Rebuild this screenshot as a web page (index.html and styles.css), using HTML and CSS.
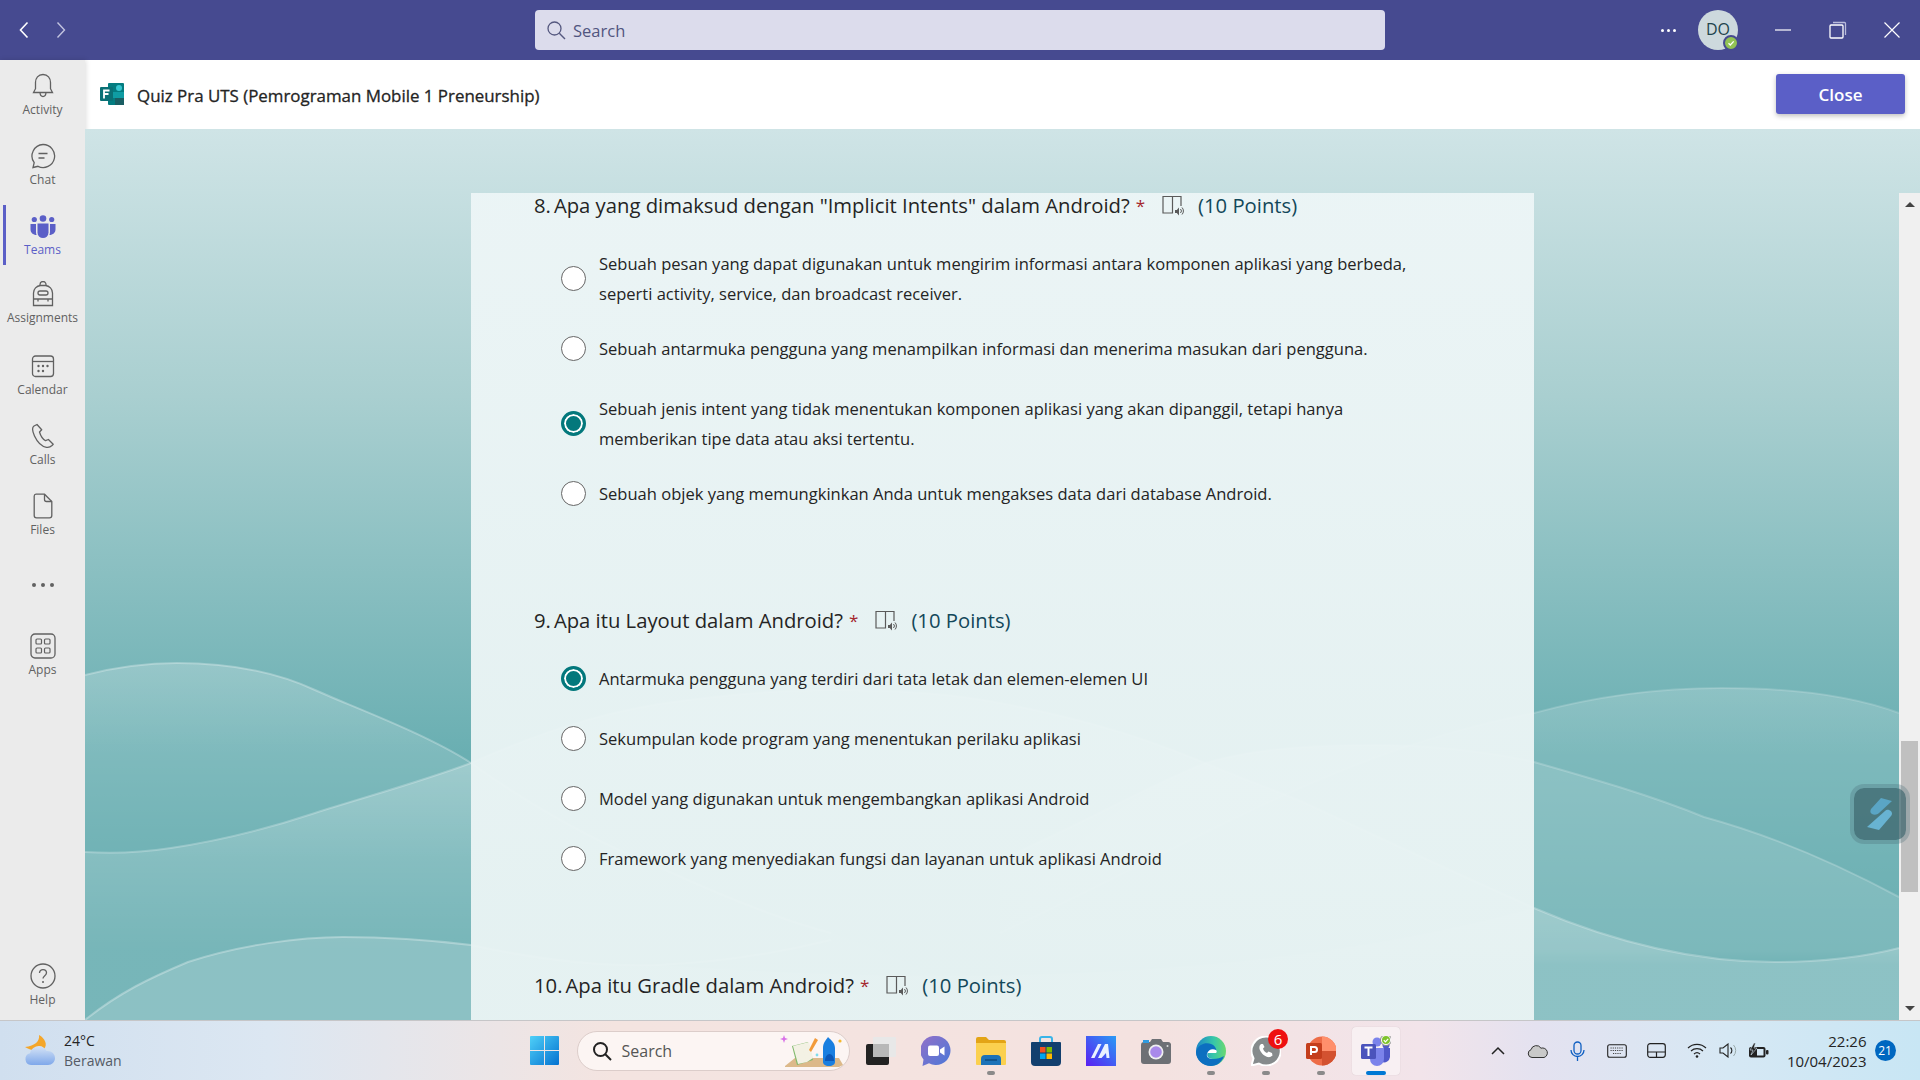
FILE: index.html
```html
<!DOCTYPE html>
<html lang="en">
<head>
    <meta charset="UTF-8">
    <title>Quiz Pra UTS</title>
    <link rel="stylesheet" href="styles.css">
</head>
<body>
    <!-- Title bar -->
    <header class="titlebar">
        <div class="nav-arrows">
            <svg width="12" height="18" viewBox="0 0 12 18"><path d="M9.5 1.5 2.5 9l7 7.5" fill="none" stroke="#fff" stroke-width="1.6"/></svg>
            <svg width="12" height="18" viewBox="0 0 12 18"><path d="M2.5 1.5 9.5 9l-7 7.5" fill="none" stroke="#c3c4e0" stroke-width="1.4"/></svg>
        </div>
        <div class="top-search">
            <svg width="20" height="20" viewBox="0 0 20 20"><circle cx="8.5" cy="8.5" r="6.5" fill="none" stroke="#55587f" stroke-width="1.3"/><path d="M13.3 13.3 19 19" stroke="#55587f" stroke-width="1.4"/></svg>
            <span>Search</span>
        </div>
        <div class="window-tools">
            <div class="more-dots"><i></i><i></i><i></i></div>
            <div class="avatar">DO<span class="avatar-status"><svg width="8" height="8" viewBox="0 0 8 8"><path d="M1.5 4.2 3.3 6 6.7 2.4" fill="none" stroke="#fff" stroke-width="1.3"/></svg></span></div>
            <svg class="win-min" width="16" height="2" viewBox="0 0 16 2"><path d="M0 1h16" stroke="#fff" stroke-width="1.2"/></svg>
            <svg class="win-max" width="18" height="18" viewBox="0 0 18 18"><rect x="1" y="4" width="13" height="13" rx="1" fill="none" stroke="#fff" stroke-width="1.3"/><path d="M4 1.5h11.5a1 1 0 0 1 1 1V14" fill="none" stroke="#b9bbdb" stroke-width="1.3"/></svg>
            <svg class="win-close" width="16" height="16" viewBox="0 0 16 16"><path d="M.5.5l15 15M15.5.5l-15 15" stroke="#fff" stroke-width="1.2"/></svg>
        </div>
    </header>

    <div class="app">
        <!-- App rail -->
        <nav class="rail">
            <a class="rail-item">
                <svg width="26" height="26" viewBox="0 0 26 26"><path d="M13 1.5c-4.8 0-7.5 3.6-7.5 8v6.200L3.500 19.500h19l-2-3.800V9.500c0-4.400-2.700-8-7.500-8Z" fill="none" stroke="#616161" stroke-width="1.300"/><path d="M10 19.500c.2 2.600 1.400 4 3 4s2.800-1.400 3-4" fill="none" stroke="#616161" stroke-width="1.300"/></svg>
                <span>Activity</span>
            </a>
            <a class="rail-item">
                <svg width="26" height="26" viewBox="0 0 26 26"><path d="M13 1.500a11.500 11.500 0 1 1-5 21.800l-5 1.200 1.200-4.800A11.500 11.500 0 0 1 13 1.500Z" fill="none" stroke="#616161" stroke-width="1.300"/><path d="M8.500 10.500h9M8.500 15h6" stroke="#616161" stroke-width="1.300"/></svg>
                <span>Chat</span>
            </a>
            <a class="rail-item rail-active">
                <svg width="26" height="24" viewBox="0 0 26 24"><g fill="#5b5fc7"><circle cx="13" cy="3.500" r="3.300"/><circle cx="4.300" cy="4.500" r="2.600"/><circle cx="21.700" cy="4.500" r="2.600"/><path d="M7.500 8.500h11v9a5.500 5.500 0 0 1-11 0Z"/><path d="M.5 9h5.500v8c0 1.100.2 2 .6 3C3 20 .5 17.500.5 14.500Z"/><path d="M25.500 9H20v8c0 1.100-.2 2-.6 3 3.600 0 6.100-2.500 6.100-5.500Z"/></g></svg>
                <span>Teams</span>
            </a>
            <a class="rail-item rail-assignments">
                <svg width="22" height="26" viewBox="0 0 22 26"><path d="M8 5V3.500a3 3 0 0 1 6 0V5" fill="none" stroke="#616161" stroke-width="1.300"/><path d="M1.500 24.500V12a7.500 7.500 0 0 1 7-7.500h5a7.500 7.500 0 0 1 7 7.500v12.500Z" fill="none" stroke="#616161" stroke-width="1.300"/><rect x="6" y="10" width="10" height="4" rx="2" fill="none" stroke="#616161" stroke-width="1.300"/><path d="M1.500 18h19M6 18v2.500M16 18v2.500" fill="none" stroke="#616161" stroke-width="1.300"/></svg>
                <span>Assignments</span>
            </a>
            <a class="rail-item">
                <svg width="24" height="26" viewBox="0 -1 24 26"><rect x="1.500" y="2" width="21" height="20.500" rx="3" fill="none" stroke="#616161" stroke-width="1.300"/><path d="M1.500 7.500h21" stroke="#616161" stroke-width="1.300"/><g fill="#616161"><circle cx="7.500" cy="12" r="1.200"/><circle cx="12" cy="12" r="1.200"/><circle cx="16.500" cy="12" r="1.200"/><circle cx="7.500" cy="17" r="1.200"/><circle cx="12" cy="17" r="1.200"/></g></svg>
                <span>Calendar</span>
            </a>
            <a class="rail-item">
                <svg width="24" height="26" viewBox="0 0 24 26"><path d="M6 1.500 3 3C1 4.500 1.200 8 3.500 13c2.700 5.800 7 10.500 12 11.300 2 .3 4-.3 5.500-1.800l1.200-1.300-4.800-4.700-2.900 1.200c-2.900-1.700-4.900-4.900-6-8.700l2.200-2.300Z" fill="none" stroke="#616161" stroke-width="1.300" stroke-linejoin="round"/></svg>
                <span>Calls</span>
            </a>
            <a class="rail-item">
                <svg width="20" height="26" viewBox="0 0 20 26"><path d="M3 1.200h8.500l7.300 7.300V22.500a2.300 2.300 0 0 1-2.300 2.300H3.500a2.300 2.300 0 0 1-2.300-2.300V3A2 2 0 0 1 3 1.200Z" fill="none" stroke="#616161" stroke-width="1.300"/><path d="M11.500 1.200V6.500a2 2 0 0 0 2 2h5.300" fill="none" stroke="#616161" stroke-width="1.300"/></svg>
                <span>Files</span>
            </a>
            <a class="rail-item rail-more"><i></i><i></i><i></i></a>
            <a class="rail-item">
                <svg width="26" height="26" viewBox="0 0 26 26"><rect x="1" y="1" width="24" height="24" rx="4" fill="none" stroke="#616161" stroke-width="1.300"/><g fill="none" stroke="#616161" stroke-width="1.200"><rect x="6" y="6" width="5.500" height="5" rx="1"/><rect x="14.500" y="6" width="5.500" height="5" rx="1"/><rect x="6" y="15" width="5.500" height="5" rx="1"/><rect x="14.500" y="15" width="5.500" height="5" rx="1"/></g></svg>
                <span>Apps</span>
            </a>
            <a class="rail-item rail-help">
                <svg width="26" height="26" viewBox="0 0 26 26"><circle cx="13" cy="13" r="12" fill="none" stroke="#616161" stroke-width="1.300"/><path d="M9.500 10c0-2 1.500-3.400 3.500-3.400s3.500 1.300 3.500 3.200c0 2.800-3.500 2.900-3.500 5.700" fill="none" stroke="#616161" stroke-width="1.300"/><circle cx="13" cy="19" r="1" fill="#616161"/></svg>
                <span>Help</span>
            </a>
        </nav>

        <main class="content">
            <div class="page-header">
                <svg class="forms-logo" width="24" height="22" viewBox="0 0 24 22"><rect x="8" y="0" width="16" height="22" rx="1" fill="#037c80"/><circle cx="19" cy="5" r="3" fill="#37c6d0"/><rect x="13" y="9" width="11" height="6" fill="#0f9ca3"/><rect x="15" y="15" width="9" height="7" fill="#1a5e63"/><rect x="0" y="4" width="13" height="14" rx="1" fill="#0a7075"/><path d="M4 15.500V7.500h5.500M4 11h4.500" stroke="#fff" stroke-width="1.800" fill="none"/></svg>
                <h1 class="page-title">Quiz Pra UTS (Pemrograman Mobile 1 Preneurship)</h1>
                <button class="close-btn">Close</button>
            </div>

            <div class="stage">
                <svg class="stage-waves" viewBox="85 129 1835 891" preserveAspectRatio="none">
                    <defs>
                        <linearGradient id="fadeA" gradientUnits="userSpaceOnUse" x1="0" y1="663" x2="0" y2="860"><stop offset="0" stop-color="#fff" stop-opacity=".22"/><stop offset="1" stop-color="#fff" stop-opacity=".04"/></linearGradient>
                        <linearGradient id="fadeB" gradientUnits="userSpaceOnUse" x1="0" y1="763" x2="0" y2="950"><stop offset="0" stop-color="#fff" stop-opacity=".26"/><stop offset="1" stop-color="#fff" stop-opacity=".05"/></linearGradient>
                        <linearGradient id="fadeLens" gradientUnits="userSpaceOnUse" x1="0" y1="688" x2="0" y2="890"><stop offset="0" stop-color="#fff" stop-opacity=".18"/><stop offset="1" stop-color="#fff" stop-opacity=".03"/></linearGradient>
                        <linearGradient id="fadeD" gradientUnits="userSpaceOnUse" x1="0" y1="745" x2="0" y2="965"><stop offset="0" stop-color="#fff" stop-opacity=".24"/><stop offset=".93" stop-color="#fff" stop-opacity=".12"/><stop offset="1" stop-color="#fff" stop-opacity=".05"/></linearGradient>
                    </defs>
                    <!-- Wave 1: falls from the left edge -->
                    <path d="M85 675C120 666 150 663 177 663 240 663 285 676 315 690 345 704 425 733 471 763 530 805 590 840 659 867 720 895 780 920 831 933 900 955 1000 1010 1050 1020H85Z" fill="url(#fadeA)"/>
                    <path d="M85 675C120 666 150 663 177 663 240 663 285 676 315 690 345 704 425 733 471 763 530 805 590 840 659 867 720 895 780 920 831 933" fill="none" stroke="#fff" stroke-opacity=".28" stroke-width="2"/>
                    <!-- Wave 2: rises through the panel, falls to the right -->
                    <path d="M85 852C115 854 145 852 171 848 225 840 270 828 315 813 365 797 420 782 471 763 530 737 590 715 659 704 720 695 780 690 831 690 890 690 950 693 1000 703 1090 720 1150 740 1205 763 1250 782 1280 792 1305 803 1380 838 1460 875 1534 908 1620 945 1700 962 1775 962 1820 962 1860 958 1899 948V1020H85Z" fill="url(#fadeB)"/>
                    <path d="M85 852C115 854 145 852 171 848 225 840 270 828 315 813 365 797 420 782 471 763 530 737 590 715 659 704 720 695 780 690 831 690 890 690 950 693 1000 703 1090 720 1150 740 1205 763 1250 782 1280 792 1305 803 1380 838 1460 875 1534 908 1620 945 1700 962 1775 962 1820 962 1860 958 1899 948" fill="none" stroke="#fff" stroke-opacity=".25" stroke-width="2"/>
                    <!-- Right hand lens between the two upper curves -->
                    <path d="M1000 933C1200 840 1340 750 1534 713 1600 695 1660 688 1722 688 1790 688 1850 695 1899 713V897C1830 860 1770 835 1704 817 1650 795 1590 778 1534 762 1480 750 1420 745 1375 745 1300 745 1250 750 1205 763 1150 785 1080 825 1000 933Z" fill="url(#fadeLens)"/>
                    <path d="M1000 933C1200 840 1340 750 1534 713 1600 695 1660 688 1722 688 1790 688 1850 695 1899 713" fill="none" stroke="#fff" stroke-opacity=".16" stroke-width="2"/>
                    <!-- Band under the right curve -->
                    <path d="M1000 860C1080 825 1150 785 1205 763 1250 750 1300 745 1375 745 1420 745 1480 750 1534 762 1590 778 1650 795 1704 817 1770 835 1830 860 1899 897V1020H1000Z" fill="url(#fadeD)"/>
                    <path d="M1000 860C1080 825 1150 785 1205 763 1250 750 1300 745 1375 745 1420 745 1480 750 1534 762 1590 778 1650 795 1704 817 1770 835 1830 860 1899 897" fill="none" stroke="#fff" stroke-opacity=".2" stroke-width="2"/>
                    <!-- Bottom wave -->
                    <path d="M85 1020C120 992 150 978 188 962 240 945 300 937 343 937 390 937 430 940 471 945 540 960 600 967 659 965 800 975 1200 1000 1534 908 1620 945 1700 962 1775 962 1820 962 1860 958 1899 948V1020Z" fill="#fff" fill-opacity=".16"/>
                    <path d="M85 1020C120 992 150 978 188 962 240 945 300 937 343 937 390 937 430 940 471 945 540 960 600 967 659 965 730 962 790 950 831 940" fill="none" stroke="#fff" stroke-opacity=".3" stroke-width="2"/>
                </svg>

                <div class="stage-body">
                    <section class="quiz-panel">
                        <!-- Question 8 -->
                        <div class="question">
                            <div class="question-title">
                                <span class="q-number">8.</span>
                                <span>Apa yang dimaksud dengan "Implicit Intents" dalam Android?</span>
                                <span class="q-required">*</span>
                                <svg class="q-reader" width="22" height="21" viewBox="0 0 22 21"><path d="M10.500 18H1V1.500h9.500V18ZM10.500 1.500H19V11" fill="none" stroke="#5a5a5a" stroke-width="1.200"/><path d="M13 15h1.800L17 12.500v8L14.800 18H13Z" fill="#5a5a5a"/><path d="M18.500 14a2.800 2.800 0 0 1 0 4M20 12.500a5 5 0 0 1 0 7" fill="none" stroke="#5a5a5a"/></svg>
                                <span class="q-points">(10 Points)</span>
                            </div>
                            <div class="option">
                                <span class="radio"></span>
                                <span class="option-text">Sebuah pesan yang dapat digunakan untuk mengirim informasi antara komponen aplikasi yang berbeda, seperti activity, service, dan broadcast receiver.</span>
                            </div>
                            <div class="option option-tight">
                                <span class="radio"></span>
                                <span class="option-text">Sebuah antarmuka pengguna yang menampilkan informasi dan menerima masukan dari pengguna.</span>
                            </div>
                            <div class="option">
                                <span class="radio radio-checked"></span>
                                <span class="option-text">Sebuah jenis intent yang tidak menentukan komponen aplikasi yang akan dipanggil, tetapi hanya memberikan tipe data atau aksi tertentu.</span>
                            </div>
                            <div class="option option-tight">
                                <span class="radio"></span>
                                <span class="option-text">Sebuah objek yang memungkinkan Anda untuk mengakses data dari database Android.</span>
                            </div>
                        </div>

                        <!-- Question 9 -->
                        <div class="question">
                            <div class="question-title">
                                <span class="q-number">9.</span>
                                <span>Apa itu Layout dalam Android?</span>
                                <span class="q-required">*</span>
                                <svg class="q-reader" width="22" height="21" viewBox="0 0 22 21"><path d="M10.500 18H1V1.500h9.500V18ZM10.500 1.500H19V11" fill="none" stroke="#5a5a5a" stroke-width="1.200"/><path d="M13 15h1.800L17 12.500v8L14.800 18H13Z" fill="#5a5a5a"/><path d="M18.500 14a2.800 2.800 0 0 1 0 4M20 12.500a5 5 0 0 1 0 7" fill="none" stroke="#5a5a5a"/></svg>
                                <span class="q-points">(10 Points)</span>
                            </div>
                            <div class="option">
                                <span class="radio radio-checked"></span>
                                <span class="option-text">Antarmuka pengguna yang terdiri dari tata letak dan elemen-elemen UI</span>
                            </div>
                            <div class="option">
                                <span class="radio"></span>
                                <span class="option-text">Sekumpulan kode program yang menentukan perilaku aplikasi</span>
                            </div>
                            <div class="option">
                                <span class="radio"></span>
                                <span class="option-text">Model yang digunakan untuk mengembangkan aplikasi Android</span>
                            </div>
                            <div class="option">
                                <span class="radio"></span>
                                <span class="option-text">Framework yang menyediakan fungsi dan layanan untuk aplikasi Android</span>
                            </div>
                        </div>

                        <!-- Question 10 -->
                        <div class="question">
                            <div class="question-title">
                                <span class="q-number">10.</span>
                                <span>Apa itu Gradle dalam Android?</span>
                                <span class="q-required">*</span>
                                <svg class="q-reader" width="22" height="21" viewBox="0 0 22 21"><path d="M10.500 18H1V1.500h9.500V18ZM10.500 1.500H19V11" fill="none" stroke="#5a5a5a" stroke-width="1.200"/><path d="M13 15h1.800L17 12.500v8L14.800 18H13Z" fill="#5a5a5a"/><path d="M18.500 14a2.800 2.800 0 0 1 0 4M20 12.500a5 5 0 0 1 0 7" fill="none" stroke="#5a5a5a"/></svg>
                                <span class="q-points">(10 Points)</span>
                            </div>
                        </div>
                    </section>

                    <div class="scrollbar">
                        <span class="scroll-up"></span>
                        <span class="scroll-thumb"></span>
                        <span class="scroll-down"></span>
                    </div>
                </div>

                <!-- Floating widget over the scrollbar -->
                <div class="float-widget">
                    <svg width="28" height="34" viewBox="0 0 28 34"><path d="M15 1 26 4 13 16c-2 2-5 2-7 1-2-1-2-3-1-5Z" fill="#5aa5c4"/><path d="M23 13c3 1 4 4 2 6L13 33 1 30 19 14c1-1 3-1.500 4-1Z" fill="#68b3d2"/></svg>
                </div>
            </div>
        </main>
    </div>

    <!-- Windows taskbar -->
    <footer class="taskbar">
        <div class="weather">
            <svg width="32" height="32" viewBox="0 0 32 32"><defs><linearGradient id="cloudFill" x1="0" y1="0" x2="0" y2="1"><stop offset="0" stop-color="#d6e4f6"/><stop offset="1" stop-color="#7fa8ea"/></linearGradient></defs><path d="M15 0C16 6 11 11 1 12 5 15 14 17 20 14 24 10 21 3 15 0Z" fill="#f4a62a"/><path d="M7 30a6 6 0 0 1-1-11.800C7 14 11 11 15 11c3.500 0 6 2 7.500 5 5-.5 8.500 3 8.500 7 0 4-3 7-7 7Z" fill="url(#cloudFill)"/></svg>
            <div class="weather-text">
                <span class="weather-temp">24°C</span>
                <span class="weather-desc">Berawan</span>
            </div>
        </div>

        <div class="task-apps">
            <div class="task-app">
                <svg width="29" height="29" viewBox="0 0 29 29"><defs><linearGradient id="startTile" x1="0" y1="0" x2="1" y2="1"><stop offset="0" stop-color="#4fd0f8"/><stop offset="1" stop-color="#0472d0"/></linearGradient></defs><path d="M0 1a1 1 0 0 1 1-1h13v14H0ZM15 0h13a1 1 0 0 1 1 1v13H15ZM0 15h14v14H1a1 1 0 0 1-1-1ZM15 15h14v13a1 1 0 0 1-1 1H15Z" fill="url(#startTile)"/></svg>
            </div>
            <div class="task-search">
                <svg width="20" height="20" viewBox="0 0 20 20"><circle cx="8.500" cy="8.500" r="6.500" fill="none" stroke="#222" stroke-width="2"/><path d="M13.300 13.300 19 19" stroke="#222" stroke-width="2"/></svg>
                <span>Search</span>
                <svg class="search-art" width="66" height="34" viewBox="0 0 66 34"><path d="M6 32 16 24h44l4 7-4 2H6Z" fill="#dcb98a"/><path d="M13 12 29 8l5 18-16 5Z" fill="#7fb96b"/><path d="M14 12 22 10l6 18-9 2ZM22 10l8-2 4 16-6 4Z" fill="#f3f1e4"/><path d="M30 16 36 4l3 2-7 12Z" fill="#f29a3a"/><path d="M5 1l1 3 3 1-3 1-1 3-1-3-3-1 3-1Z" fill="#d86fe8"/><path d="M44 28V14c0-5 3-8 5-11 3 3 7 6 7 11v14c0 2-2 4-6 4s-6-2-6-4Z" fill="#1a7fe0"/><path d="M46 27c0-4 2-7 4.500-7s4.500 3 4.500 7Z" fill="#0c58b8"/><circle cx="61" cy="7" r="1.600" fill="#f4b82e"/><circle cx="38" cy="21" r="1.400" fill="#7fdcec"/></svg>
            </div>
            <div class="task-app">
                <svg width="30" height="28" viewBox="0 0 30 28"><rect x="0" y="7" width="23" height="21" rx="2" fill="#222"/><rect x="7" y="0" width="23" height="20" rx="1" fill="#e8e8e8"/><rect x="7" y="7" width="16" height="13" fill="#b8b8b8"/></svg>
            </div>
            <div class="task-app">
                <svg width="30" height="30" viewBox="0 0 30 30"><defs><linearGradient id="meetFill" x1="0" y1="0" x2="1" y2="1"><stop offset="0" stop-color="#9370c8"/><stop offset="1" stop-color="#4a78d8"/></linearGradient></defs><path d="M15 0a14.500 14.500 0 1 1-7 27.200L1.500 30l1-6.500A14.500 14.500 0 0 1 15 0Z" fill="url(#meetFill)"/><rect x="7" y="9.500" width="11" height="10.500" rx="2" fill="#fff"/><path d="M19 13.500 23.500 10.500v9L19 16.500Z" fill="#fff"/></svg>
            </div>
            <div class="task-app">
                <svg width="30" height="28" viewBox="0 0 30 28"><path d="M0 2a2 2 0 0 1 2-2h8l3 3h15a2 2 0 0 1 2 2v6H0Z" fill="#e3a416"/><path d="M0 6h30v21a1 1 0 0 1-1 1H1a1 1 0 0 1-1-1Z" fill="#fbd04f"/><path d="M5 22a4 4 0 0 1 4-4h12a4 4 0 0 1 4 4v6H5Z" fill="#1c72b8"/><path d="M9 23h12" stroke="#0c4c82" stroke-width="1.500"/></svg>
                <i class="task-dot"></i>
            </div>
            <div class="task-app">
                <svg width="30" height="30" viewBox="0 0 30 30"><path d="M9 6V3a2 2 0 0 1 2-2h8a2 2 0 0 1 2 2v3" fill="none" stroke="#3ab4e8" stroke-width="2"/><path d="M0 7a1 1 0 0 1 1-1h28a1 1 0 0 1 1 1v19a4 4 0 0 1-4 4H4a4 4 0 0 1-4-4Z" fill="#123f6e"/><rect x="9" y="11" width="5.500" height="5.500" fill="#f25022"/><rect x="15.500" y="11" width="5.500" height="5.500" fill="#7fba00"/><rect x="9" y="17.500" width="5.500" height="5.500" fill="#00a4ef"/><rect x="15.500" y="17.500" width="5.500" height="5.500" fill="#ffb900"/></svg>
            </div>
            <div class="task-app">
                <svg width="30" height="30" viewBox="0 0 30 30"><defs><linearGradient id="mailTile" x1="0" y1="1" x2="1" y2="0"><stop offset="0" stop-color="#5a1ef2"/><stop offset="1" stop-color="#2a9bf5"/></linearGradient></defs><rect width="30" height="30" fill="url(#mailTile)"/><path d="M5 22 12 8h3.500L8.500 22ZM12 22 19 8h3l1.500 14h-3L20 17l-4.500 5Z" fill="#eaf2ff"/></svg>
            </div>
            <div class="task-app">
                <svg width="30" height="26" viewBox="0 0 30 26"><path d="M3 4h6l2-3h9l2 3h5a3 3 0 0 1 3 2v17a3 3 0 0 1-3 3H3a3 3 0 0 1-3-3V7a3 3 0 0 1 3-3Z" fill="#6d7075"/><rect x="2" y="2" width="6" height="3" fill="#2f9be0"/><circle cx="15" cy="14" r="7.500" fill="#efefef"/><circle cx="15" cy="14" r="5.800" fill="#a989ea"/><circle cx="26.500" cy="8" r="1" fill="#ddd"/></svg>
            </div>
            <div class="task-app">
                <svg width="30" height="30" viewBox="0 0 30 30"><defs><linearGradient id="edgeTop" x1="0" y1="0" x2="1" y2="0"><stop offset="0" stop-color="#1a85c8"/><stop offset=".6" stop-color="#38c8a8"/><stop offset="1" stop-color="#6ad870"/></linearGradient></defs><circle cx="15" cy="15" r="15" fill="url(#edgeTop)"/><path d="M0 16C2 8 10 6 15 8c5 2 6 6 5 9h-8c-2 2 0 6 5 6 4 0 8-1 11-3-2 6-7 10-13 10C7 30 0 24 0 16Z" fill="#0c6fc0"/><path d="M11 18c1-4 5-6 9-4 1 1 1 2 0 3h-8c-2 2 0 6 5 6-4 0-7-2-6-5Z" fill="#fff"/></svg>
                <i class="task-dot"></i>
            </div>
            <div class="task-app">
                <svg width="30" height="30" viewBox="0 0 30 30"><path d="M15 .5A14.500 14.500 0 0 0 2.500 22.300L.5 29.500l7.400-2A14.500 14.500 0 1 0 15 .5Z" fill="#868b8c" stroke="#fff" stroke-width="2"/><path d="M10 8c-1 1-2 2-1.500 5 1 3.500 4.500 7 8 8 2.500.5 4-.5 5-1.500l-.5-2.500-3.500-1.500-1.500 1.500c-2-1-3.500-2.500-4-4.500l1.500-1.500L12 8Z" fill="#fff"/></svg>
                <span class="task-badge">6</span>
                <i class="task-dot"></i>
            </div>
            <div class="task-app">
                <svg width="30" height="30" viewBox="0 0 30 30"><circle cx="16" cy="15" r="14.500" fill="#ed6c47"/><path d="M16 15V.5A14.500 14.500 0 0 1 30.500 15Z" fill="#ff8f6b"/><path d="M16 15h14.500A14.500 14.500 0 0 1 16 29.500Z" fill="#d35230"/><rect x="0" y="7" width="16" height="16" rx="1.500" fill="#c43e1c"/><path d="M5 19V11h3.500a2.500 2.500 0 0 1 0 5H5" fill="none" stroke="#fff" stroke-width="2"/></svg>
                <i class="task-dot"></i>
            </div>
            <div class="task-app task-active">
                <svg width="30" height="30" viewBox="0 0 30 30"><circle cx="16" cy="6" r="4.500" fill="#7b83eb"/><circle cx="25" cy="9" r="3.500" fill="#5059c9"/><path d="M19 12h10v9a6 6 0 0 1-8 5Z" fill="#5059c9"/><path d="M9 12h14v11a7 7 0 0 1-14 0Z" fill="#7b83eb"/><rect x="0" y="8" width="15" height="15" rx="1.500" fill="#4b53bc"/><path d="M3.500 11.500h8M7.500 11.500V20" stroke="#fff" stroke-width="2"/><circle cx="25" cy="4" r="5.500" fill="#fff" stroke="#888"/><circle cx="25" cy="4" r="4" fill="#7fc32d"/><path d="M22.800 4.200 24.400 5.800 27.200 2.800" fill="none" stroke="#fff" stroke-width="1.200"/></svg>
                <i class="task-dot task-dot-active"></i>
            </div>
        </div>

        <div class="tray">
            <svg class="tray-chevron" width="14" height="9" viewBox="0 0 14 9"><path d="M1 8 7 2l6 6" fill="none" stroke="#222" stroke-width="1.500"/></svg>
            <svg class="tray-cloud" width="21" height="14" viewBox="0 0 21 14"><path d="M5 13.500a4 4 0 0 1-1-7.800 5.500 5.500 0 0 1 10-1.500 4.500 4.500 0 0 1 3 9.300Z" fill="#c9c9c9" stroke="#333"/></svg>
            <svg class="tray-mic" width="15" height="20" viewBox="0 0 15 20"><rect x="4" y="1" width="7" height="12" rx="3.500" fill="none" stroke="#0f5fc2" stroke-width="1.300"/><path d="M1 9a6.500 6.500 0 0 0 13 0M7.500 15.500V20" fill="none" stroke="#0f5fc2" stroke-width="1.300"/></svg>
            <svg class="tray-keyboard" width="20" height="14" viewBox="0 0 20 14"><rect x=".7" y=".7" width="18.600" height="12.600" rx="2" fill="none" stroke="#222" stroke-width="1.100"/><path d="M3.500 4h13M3.500 6.500h13M6 9.500h8" stroke="#444" stroke-dasharray="1.200 1" fill="none"/></svg>
            <svg class="tray-touchpad" width="19" height="15" viewBox="0 0 19 15"><rect x=".7" y=".7" width="17.600" height="13.600" rx="2.500" fill="none" stroke="#222" stroke-width="1.200"/><path d="M.7 9h17.600M9.500 9v5" stroke="#222" stroke-width="1.200"/></svg>
            <svg class="tray-wifi" width="20" height="15" viewBox="0 0 20 15"><path d="M1 5a13 13 0 0 1 18 0M4 8a9 9 0 0 1 12 0M7 11a4.500 4.500 0 0 1 6 0" fill="none" stroke="#222" stroke-width="1.200"/><circle cx="10" cy="13.500" r="1.300" fill="#222"/></svg>
            <svg class="tray-speaker" width="20" height="15" viewBox="0 0 20 15"><path d="M1 5h3l5-4v13l-5-4H1Z" fill="none" stroke="#222" stroke-width="1.100"/><path d="M11.500 4.500a4 4 0 0 1 0 6" fill="none" stroke="#222" stroke-width="1.100"/><path d="M14.500 2a8 8 0 0 1 0 11" fill="none" stroke="#9aa" stroke-width="1"/></svg>
            <svg class="tray-battery" width="21" height="16" viewBox="0 0 21 16"><rect x="1" y="4" width="16.500" height="10.500" rx="2" fill="#222"/><rect x="18" y="7" width="2.500" height="4.500" rx="1" fill="#222"/><path d="M6 0 2 7h3l-2 5 6-7H6l1.500-5Z" fill="#222" stroke="#d6e8f4" stroke-width=".6"/><rect x="9" y="6" width="6.500" height="6.500" fill="#d6e8f4"/></svg>
            <div class="clock">
                <span>22:26</span>
                <span>10/04/2023</span>
            </div>
            <span class="notif-badge">21</span>
        </div>
    </footer>
</body>
</html>
```

FILE: styles.css
```css
/* General Styling */
* {
    box-sizing: border-box;
}

body {
    margin: 0;
    width: 1920px;
    height: 1080px;
    overflow: hidden;
    display: flex;
    flex-direction: column;
    font-family: "Open Sans", "Noto Sans", sans-serif;
    color: #242424;
    background-color: #ebebeb;
}

svg {
    display: block;
    flex-shrink: 0;
}

/* Title bar */
.titlebar {
    height: 60px;
    flex-shrink: 0;
    display: flex;
    align-items: center;
    background-color: #464a90;
}

.nav-arrows {
    width: 535px;
    display: flex;
    gap: 25px;
    padding-left: 18px;
}

.top-search {
    width: 850px;
    height: 40px;
    display: flex;
    align-items: center;
    gap: 7px;
    padding-left: 11px;
    background-color: #dcdcec;
    border-radius: 4px;
    color: #51557f;
    font-size: 16.5px;
}

.window-tools {
    flex: 1;
    display: flex;
    align-items: center;
    padding-left: 276px;
}

.more-dots {
    display: flex;
    gap: 3px;
}

.more-dots i {
    width: 3px;
    height: 3px;
    border-radius: 50%;
    background-color: #fff;
}

.avatar {
    position: relative;
    width: 40px;
    height: 40px;
    margin-left: 22px;
    border-radius: 50%;
    background-color: #cdd9dd;
    color: #22444c;
    font-size: 16px;
    line-height: 38px;
    text-align: center;
}

.avatar-status {
    position: absolute;
    right: -1px;
    bottom: -1px;
    width: 16px;
    height: 16px;
    display: flex;
    align-items: center;
    justify-content: center;
    border: 2px solid #464a90;
    border-radius: 50%;
    background-color: #92c353;
}

.win-min {
    margin-left: 37px;
}

.win-max {
    margin-left: 38px;
}

.win-close {
    margin-left: 37px;
}

/* App layout */
.app {
    flex: 1;
    min-height: 0;
    display: flex;
}

.rail {
    width: 85px;
    flex-shrink: 0;
    display: flex;
    flex-direction: column;
    gap: 10px;
    padding: 5px 0;
    background-color: #ebebeb;
    box-shadow: 1px 0 5px rgba(0, 0, 0, 0.14);
    position: relative;
}

.rail-item {
    height: 60px;
    display: flex;
    flex-direction: column;
    align-items: center;
    justify-content: center;
    gap: 2px;
    font-size: 12px;
    color: #616161;
}

.rail-active {
    padding: 3px 6px 0 0;
    color: #5b5fc7;
    border-left: 3px solid #5b5fc7;
    margin-left: 3px;
}

.rail-assignments {
    padding-bottom: 3px;
}

.rail-more {
    flex-direction: row;
    gap: 5px;
}

.rail-more i {
    width: 4px;
    height: 4px;
    border-radius: 50%;
    background-color: #616161;
}

.rail-help {
    margin-top: auto;
}

.content {
    flex: 1;
    min-width: 0;
    display: flex;
    flex-direction: column;
}

/* Page header */
.page-header {
    height: 69px;
    flex-shrink: 0;
    display: flex;
    align-items: center;
    padding: 0 15px 1px 15px;
    background-color: #fff;
}

.page-title {
    flex: 1;
    margin: 2px 0 0 13px;
    font-size: 16.9px;
    font-weight: 400;
    -webkit-text-stroke: 0.3px #242424;
    color: #242424;
}

.close-btn {
    width: 129px;
    height: 40px;
    border: none;
    border-radius: 3px;
    background-color: #5b5fc7;
    color: #fff;
    font-family: inherit;
    font-size: 17px;
    font-weight: 600;
    box-shadow: 0 2px 5px rgba(0, 0, 0, 0.25);
}

/* Stage */
.stage {
    position: relative;
    flex: 1;
    min-height: 0;
    overflow: hidden;
    background: linear-gradient(180deg, #cfe4e6 0%, #a9cfd0 30%, #6aafb2 70%, #6aafb2 100%);
}

.stage-waves {
    position: absolute;
    left: 0;
    top: 0;
    width: 100%;
    height: 100%;
}

.stage-body {
    position: relative;
    height: 100%;
    display: flex;
    padding: 64px 0 0 386px;
}

/* Quiz panel */
.quiz-panel {
    width: 1063px;
    padding-left: 63px;
    background: linear-gradient(180deg, rgba(236, 245, 246, 0.97), rgba(234, 244, 244, 0.95));
}

.question + .question {
    margin-top: 85px;
}

.question-title {
    display: flex;
    align-items: center;
    height: 24px;
    margin-bottom: 16px;
    font-size: 20.25px;
    color: #242424;
    white-space: nowrap;
}

.q-number {
    margin-right: 3px;
}

.q-required {
    margin-left: 6px;
    color: #a4262c;
    font-size: 17px;
}

.q-reader {
    margin-left: 17px;
}

.q-points {
    margin-left: 14px;
    color: #13485a;
}

.option {
    display: flex;
    align-items: center;
    gap: 12px;
    width: 896px;
    padding: 15px 0 15px 28px;
    font-size: 16.55px;
    line-height: 30px;
}

.option-tight {
    margin-top: -5px;
}

.option-text {
    transform: translateY(1px);
}

.radio {
    width: 25px;
    height: 25px;
    flex-shrink: 0;
    margin-left: -1px;
    margin-right: 1px;
    border: 1.5px solid #666;
    border-radius: 50%;
    background-color: #fff;
}

.radio-checked {
    border: 3px solid #03787c;
    background-color: #03787c;
    box-shadow: inset 0 0 0 2px #fff;
}

/* Scrollbar */
.scrollbar {
    position: relative;
    width: 21px;
    margin-left: 365px;
    background-color: #f0f0f0;
}

.scroll-up,
.scroll-down {
    position: absolute;
    left: 6px;
    width: 0;
    height: 0;
    border-left: 5px solid transparent;
    border-right: 5px solid transparent;
}

.scroll-up {
    top: 9px;
    border-bottom: 5px solid #444;
}

.scroll-down {
    bottom: 9px;
    border-top: 5px solid #444;
}

.scroll-thumb {
    position: absolute;
    left: 2px;
    top: 548px;
    width: 17px;
    height: 151px;
    background-color: #c0c0c0;
}

.float-widget {
    position: absolute;
    left: 1765px;
    top: 655px;
    width: 60px;
    height: 60px;
    display: flex;
    align-items: center;
    justify-content: center;
    border: 4px solid rgba(74, 110, 120, 0.3);
    border-radius: 14px;
    background-color: rgba(60, 100, 108, 0.75);
    background-clip: padding-box;
}

/* Taskbar */
.taskbar {
    position: relative;
    height: 60px;
    flex-shrink: 0;
    display: flex;
    align-items: center;
    border-top: 1px solid #c6c6c8;
    background: linear-gradient(90deg, #d0dfef 0%, #dce7f2 14%, #f4e4e0 32%, #f4e2e0 60%, #f2e4ea 74%, #e4e2f0 80%, #d6e8f4 90%, #c8e6f4 100%);
}

.weather {
    width: 517px;
    display: flex;
    align-items: center;
    gap: 8px;
    padding-left: 24px;
}

.weather-text {
    display: flex;
    flex-direction: column;
    font-size: 14px;
    line-height: 20px;
}

.weather-desc {
    color: #555b66;
}

.task-apps {
    display: flex;
    align-items: center;
}

.task-app {
    position: relative;
    width: 55px;
    height: 48px;
    display: flex;
    align-items: center;
    justify-content: center;
}

.task-active {
    width: 48px;
    margin: 0 3.5px;
    border-radius: 4px;
    background-color: rgba(255, 255, 255, 0.45);
    box-shadow: 0 0 1px rgba(0, 0, 0, 0.2);
}

.task-dot {
    position: absolute;
    left: 50%;
    bottom: 0;
    width: 8px;
    height: 4px;
    margin-left: -4px;
    border-radius: 2px;
    background-color: #8a8a8a;
}

.task-dot-active {
    width: 20px;
    margin-left: -10px;
    background-color: #0078d4;
}

.task-badge {
    position: absolute;
    top: 2px;
    left: 30px;
    width: 20px;
    height: 20px;
    border-radius: 50%;
    background-color: #ee1010;
    color: #fff;
    font-size: 15px;
    line-height: 20px;
    text-align: center;
}

.task-search {
    width: 273px;
    height: 40px;
    margin: 0 3.5px 0 4.5px;
    display: flex;
    align-items: center;
    gap: 10px;
    padding-left: 14px;
    border: 1px solid #dccdca;
    border-radius: 20px;
    background-color: #fcf5f3;
    color: #555;
    font-size: 16px;
}

.search-art {
    margin-left: auto;
    margin-right: 4px;
}

/* System tray */
.tray {
    position: absolute;
    left: 1491px;
    top: 0;
    bottom: 0;
    right: 0;
    display: flex;
    align-items: center;
}

.tray-cloud {
    margin-left: 22px;
}

.tray-mic {
    margin-left: 22px;
}

.tray-keyboard {
    margin-left: 22px;
}

.tray-touchpad {
    margin-left: 20px;
}

.tray-wifi {
    margin-left: 21px;
}

.tray-speaker {
    margin-left: 11.5px;
}

.tray-battery {
    margin-left: 9px;
}

.clock {
    display: flex;
    flex-direction: column;
    align-items: flex-end;
    width: 98px;
    font-size: 15px;
    line-height: 20px;
}

.notif-badge {
    width: 21px;
    height: 21px;
    margin-left: 8px;
    border-radius: 50%;
    background-color: #0067c0;
    color: #fff;
    font-size: 12px;
    line-height: 21px;
    text-align: center;
}
```
